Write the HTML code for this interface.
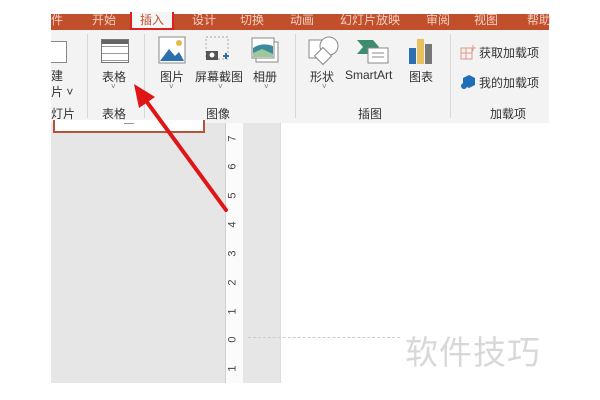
<!DOCTYPE html>
<html><head><meta charset="utf-8"><style>
body{margin:0;width:600px;height:400px;background:#fff;position:relative;overflow:hidden;font-family:"Liberation Sans","Noto Sans CJK SC",sans-serif;}
.a{position:absolute;}
.t{font-size:12px;color:#333;white-space:nowrap;}
.tab{color:#f3d0c4;font-size:12px;top:10px;}
</style></head><body>
<div class="a" style="left:51px;top:14px;width:498px;height:16px;background:#c14f2c;"></div>
<div class="a tab" style="left:51px;top:11px">件</div>
<div class="a tab" style="left:92px;top:11px">开始</div>
<div class="a" style="left:130px;top:12px;width:44px;height:18px;background:#f5f5f5;border:2px solid #e02020;border-top:none;box-sizing:border-box;"></div>
<div class="a t" style="left:140px;top:11px;color:#c14f2c">插入</div>
<div class="a tab" style="left:192px;top:11px">设计</div>
<div class="a tab" style="left:240px;top:11px">切换</div>
<div class="a tab" style="left:290px;top:11px">动画</div>
<div class="a tab" style="left:340px;top:11px">幻灯片放映</div>
<div class="a tab" style="left:426px;top:11px">审阅</div>
<div class="a tab" style="left:474px;top:11px">视图</div>
<div class="a tab" style="left:527px;top:11px">帮助</div>
<div class="a" style="left:51px;top:30px;width:498px;height:93px;background:#f3f3f3;"></div>
<div class="a" style="left:87px;top:34px;width:1px;height:84px;background:#d8d8d8"></div>
<div class="a" style="left:144px;top:34px;width:1px;height:84px;background:#d8d8d8"></div>
<div class="a" style="left:295px;top:34px;width:1px;height:84px;background:#d8d8d8"></div>
<div class="a" style="left:450px;top:34px;width:1px;height:84px;background:#d8d8d8"></div>
<div class="a" style="left:51px;top:41px;width:15px;height:20px;border:1px solid #888;border-left:none;background:#fff"></div>
<div class="a" style="left:101px;top:39px;width:26px;height:22px;border:1px solid #777;background:repeating-linear-gradient(#fff 0 6px,#999 6px 7px);"><div style="height:4px;background:#666"></div></div>
<svg class="a" style="left:158px;top:36px" width="28" height="28"><rect x="1" y="1" width="26" height="26" fill="#fff" stroke="#888"/><path d="M2 25 L11 13 L17 20 L21 16 L26 25Z" fill="#2e6fb0"/><circle cx="21" cy="7" r="3" fill="#e8b84a"/></svg>
<svg class="a" style="left:203px;top:36px" width="28" height="28"><rect x="3" y="1" width="22" height="22" fill="none" stroke="#aaa" stroke-dasharray="2 2"/><rect x="3" y="15" width="12" height="9" fill="#555"/><circle cx="9" cy="19" r="2.5" fill="#fff"/><path d="M20 20h6M23 17v6" stroke="#2e6fb0" stroke-width="2"/></svg>
<svg class="a" style="left:250px;top:36px" width="30" height="28"><rect x="6" y="6" width="22" height="20" fill="#fff" stroke="#888"/><rect x="2" y="2" width="22" height="20" fill="#fff" stroke="#888"/><path d="M3 12 Q12 6 23 10 V21 H3Z" fill="#3c8b9c"/><path d="M3 17 L12 13 L23 18 V21 H3Z" fill="#9fc79a"/></svg>
<svg class="a" style="left:307px;top:35px" width="32" height="32"><rect x="2" y="5" width="18" height="18" fill="#fff" stroke="#888"/><circle cx="22" cy="11" r="9" fill="#fff" stroke="#888"/><rect x="10" y="15" width="12" height="12" transform="rotate(45 16 21)" fill="#fff" stroke="#888"/></svg>
<svg class="a" style="left:355px;top:38px" width="34" height="26"><path d="M2 2 H18 L24 9 L18 16 H2 L8 9Z" fill="#3c8c6e"/><rect x="13" y="10" width="20" height="15" fill="#fff" stroke="#888"/><path d="M17 15h12M17 19h12" stroke="#888"/></svg>
<svg class="a" style="left:407px;top:38px" width="28" height="26"><rect x="2" y="10" width="7" height="16" fill="#2e6fb0"/><rect x="10" y="1" width="7" height="25" fill="#e8c060"/><rect x="18" y="6" width="7" height="20" fill="#777"/></svg>
<svg class="a" style="left:460px;top:44px" width="16" height="16"><rect x="1" y="4" width="11" height="11" fill="none" stroke="#d98"/><path d="M1 9h11M6 4v11M13 1v6M10 4h6" stroke="#d98"/></svg>
<svg class="a" style="left:460px;top:74px" width="16" height="16"><path d="M3 4 L9 1 L15 4 V11 L9 14 L3 11Z" fill="#1e6fb8"/><circle cx="4" cy="12" r="3" fill="#1e6fb8"/></svg>
<div class="a t" style="left:51px;top:67px">建</div>
<div class="a t" style="left:51px;top:83px">片 ˅</div>
<div class="a t" style="left:51px;top:105px">灯片</div>
<div class="a t" style="left:102px;top:68px">表格</div>
<div class="a t" style="left:111px;top:82px;font-size:8px;color:#777">˅</div>
<div class="a t" style="left:102px;top:105px">表格</div>
<div class="a t" style="left:160px;top:68px">图片</div>
<div class="a t" style="left:195px;top:68px">屏幕截图</div>
<div class="a t" style="left:253px;top:68px">相册</div>
<div class="a t" style="left:169px;top:82px;font-size:8px;color:#777">˅</div>
<div class="a t" style="left:218px;top:82px;font-size:8px;color:#777">˅</div>
<div class="a t" style="left:264px;top:82px;font-size:8px;color:#777">˅</div>
<div class="a t" style="left:206px;top:105px">图像</div>
<div class="a t" style="left:310px;top:68px">形状</div>
<div class="a t" style="left:345px;top:68px">SmartArt</div>
<div class="a t" style="left:409px;top:68px">图表</div>
<div class="a t" style="left:322px;top:82px;font-size:8px;color:#777">˅</div>
<div class="a t" style="left:358px;top:105px">插图</div>
<div class="a t" style="left:479px;top:44px">获取加载项</div>
<div class="a t" style="left:479px;top:74px">我的加载项</div>
<div class="a t" style="left:490px;top:105px">加载项</div>
<div class="a" style="left:51px;top:123px;width:174px;height:260px;background:#e6e6e6"></div>
<div class="a" style="left:53px;top:120px;width:152px;height:13px;background:#fff;border:2px solid #b5533a;border-top:none;box-sizing:border-box"><div style="margin:3px auto 0;width:10px;height:1px;background:#999"></div></div>
<div class="a" style="left:225px;top:123px;width:18px;height:260px;background:#fbfbfb;border-left:1px solid #d0d0d0;box-sizing:border-box"></div>
<div class="a" style="left:243px;top:123px;width:37px;height:260px;background:#e6e6e6"></div>
<div class="a" style="left:280px;top:123px;width:1px;height:260px;background:#ddd"></div>
<div class="a" style="left:248px;top:337px;width:152px;border-top:1px dashed #ccc"></div>
<div class="a" style="left:227px;top:123px;font-size:11px;color:#444;line-height:11px;">
<div class="a" style="left:3px;top:10px;transform:rotate(-90deg)">7</div>
<div class="a" style="left:3px;top:38px;transform:rotate(-90deg)">6</div>
<div class="a" style="left:3px;top:67px;transform:rotate(-90deg)">5</div>
<div class="a" style="left:3px;top:96px;transform:rotate(-90deg)">4</div>
<div class="a" style="left:3px;top:125px;transform:rotate(-90deg)">3</div>
<div class="a" style="left:3px;top:154px;transform:rotate(-90deg)">2</div>
<div class="a" style="left:3px;top:183px;transform:rotate(-90deg)">1</div>
<div class="a" style="left:3px;top:211px;transform:rotate(-90deg)">0</div>
<div class="a" style="left:3px;top:240px;transform:rotate(-90deg)">1</div>
</div>
<div class="a" style="left:405px;top:326px;font-size:33px;color:#d8d8d8;letter-spacing:1px;font-family:'Noto Sans CJK SC',sans-serif">软件技巧</div>
<svg class="a" style="left:0;top:0" width="600" height="400"><path d="M226 210 L144 98" stroke="#e01515" stroke-width="4" stroke-linecap="round"/><path d="M134 84 L155 97 L139 108Z" fill="#e01515"/></svg>
</body></html>
